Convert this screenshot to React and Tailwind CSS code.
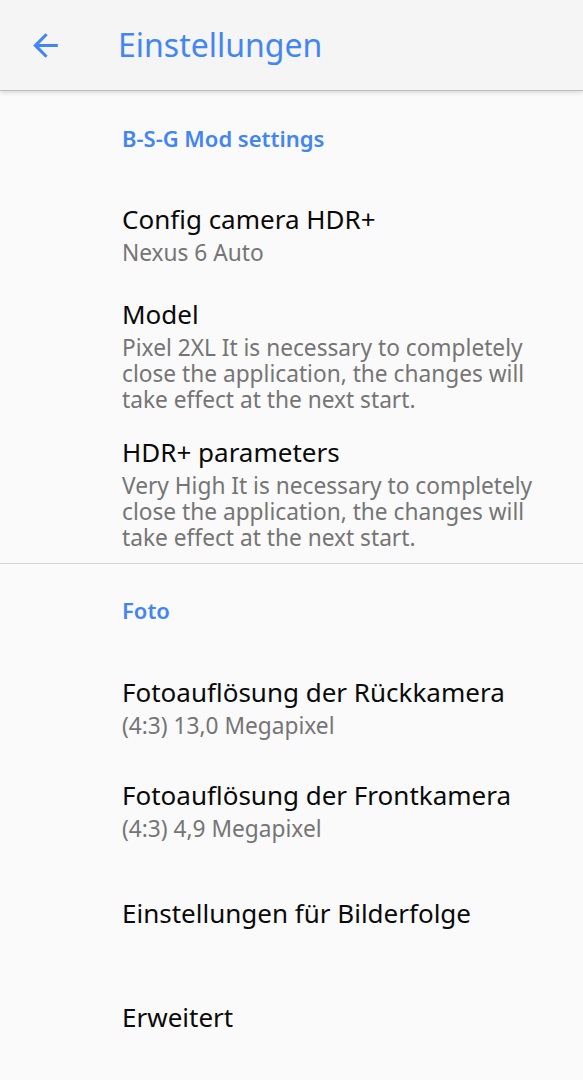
import React from 'react';

const Category = ({ title, className }) => (
  <div className={`pl-[122px] text-[22px] leading-[30px] font-semibold text-[#4285f4] ${className}`}>{title}</div>
);

const Pref = ({ title, summary, className }) => (
  <div className={`pl-[122px] pr-[40px] ${className}`}>
    <div className="text-[26px] leading-[32px] text-[#0a0a0a]">{title}</div>
    {summary && <div className="mt-[5px] text-[22.7px] leading-[26px] text-[#757575]">{summary}</div>}
  </div>
);

const App = () => {
  return (
    <div className="min-h-screen w-[583px] bg-[#fafafa] font-['Noto_Sans',sans-serif] overflow-hidden">
      <header className="relative z-10 flex items-center h-[90px] bg-[#f5f5f5] shadow-[0_1px_0_#bdbdbd,0_3px_4px_rgba(0,0,0,0.12)]">
        <svg viewBox="0 0 24 24" className="ml-[27px] w-[37px] h-[37px] fill-[#4285f4]">
          <path d="M20 11H7.83l5.59-5.59L12 4l-8 8 8 8 1.41-1.41L7.83 13H20v-2z" />
        </svg>
        <h1 className="ml-[54px] text-[32px] leading-[40px] text-[#4285f4]">Einstellungen</h1>
      </header>

      <Category title="B-S-G Mod settings" className="pt-[33px]" />
      <Pref className="mt-[50px]" title="Config camera HDR+" summary="Nexus 6 Auto" />
      <Pref
        className="mt-[32px]"
        title="Model"
        summary="Pixel 2XL It is necessary to completely close the application, the changes will take effect at the next start."
      />
      <Pref
        className="mt-[23px]"
        title="HDR+ parameters"
        summary="Very High It is necessary to completely close the application, the changes will take effect at the next start."
      />
      <div className="mt-[12px] h-px bg-[#d6d6d6]" />

      <Category title="Foto" className="pt-[31px]" />
      <Pref className="mt-[51px]" title="Fotoauflösung der Rückkamera" summary="(4:3) 13,0 Megapixel" />
      <Pref className="mt-[40px]" title="Fotoauflösung der Frontkamera" summary="(4:3) 4,9 Megapixel" />
      <Pref className="mt-[55px]" title="Einstellungen für Bilderfolge" />
      <Pref className="mt-[72px]" title="Erweitert" />
    </div>
  );
};

export default App;
